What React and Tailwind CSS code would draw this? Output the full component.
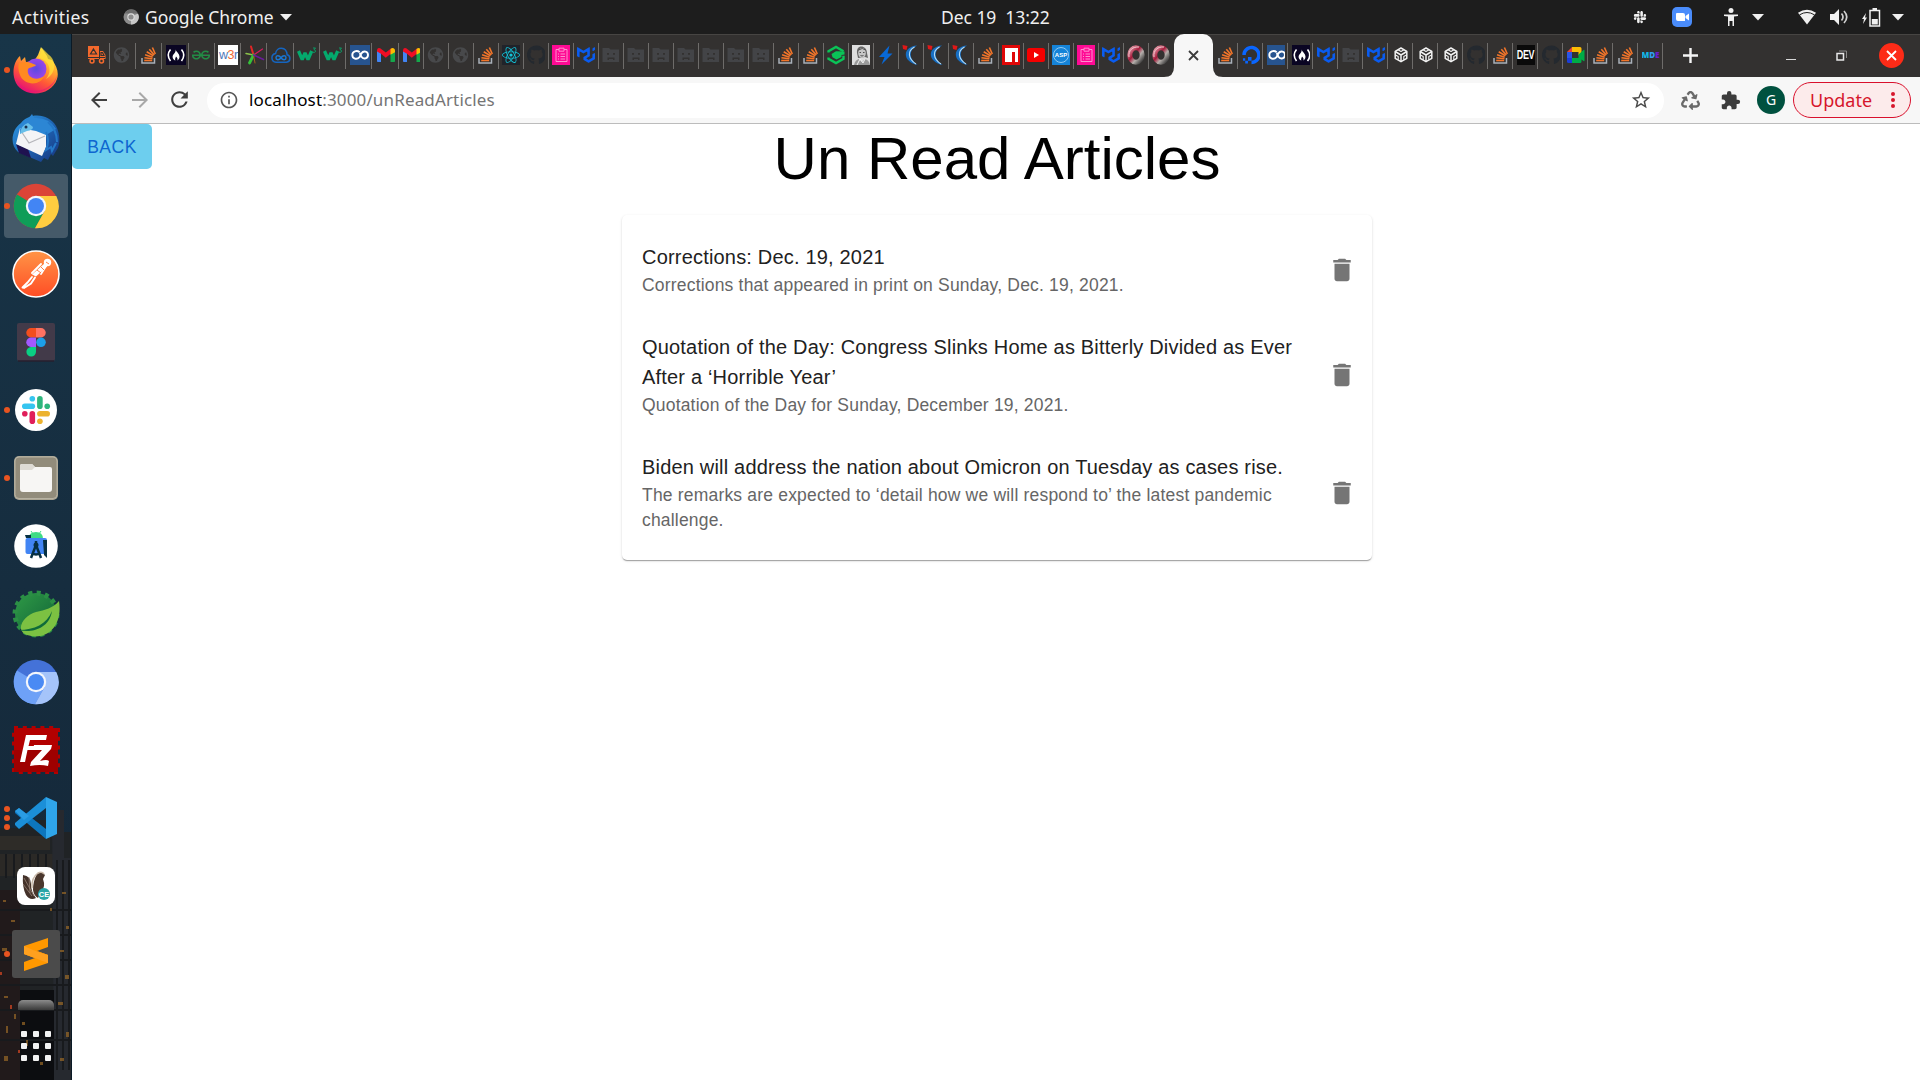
import React from "react";
import {
  FaStackOverflow,
  FaGithub,
  FaReact,
  FaGlobeAmericas,
  FaSlack,
  FaRecycle,
  FaDigitalOcean,
} from "react-icons/fa";
import { SiMui, SiGeeksforgeeks } from "react-icons/si";
import {
  MdArrowBack,
  MdArrowForward,
  MdRefresh,
  MdOutlineInfo,
  MdStarBorder,
  MdExtension,
  MdDelete,
} from "react-icons/md";

/* ---------- tab favicons, each drawn on a 20x20 box ---------- */

const Svg = ({ children, size = 20, box = 20 }) => (
  <svg className="block shrink-0" width={size} height={size} viewBox={`0 0 ${box} ${box}`} fill="none">
    {children}
  </svg>
);

const StackOverflow = () => (
  <Svg>
    <path d="M2 13V18h12.500v-5" stroke="#a9b0b8" strokeWidth="1.500" />
    <g stroke="#f4762a" strokeWidth="1.600">
      <path d="M4.200 15.500h8" />
      <path d="M4.400 12.700l8 1" />
      <path d="M5.100 9.800l7.600 2.400" />
      <path d="M6.700 6.800l6.700 4" />
      <path d="M9.300 4.300l5 5.700" />
      <path d="M12.400 2.500l2.900 6.500" />
    </g>
  </Svg>
);

const Globe = () => <FaGlobeAmericas className="h-4 w-[17px] shrink-0 text-[#48494b]" />;

const FreeCode = () => (
  <Svg>
    <path d="M0 0h20v20H0z" fill="#0a0523" />
    <path d="M4.500 4.500Q0 10 4.500 16M15.500 4.500q4.500 5.500 0 11.500" stroke="#fff" strokeWidth="1.600" />
    <path d="M9.700 4.500c.5 2.500 3.800 4 3.800 7.300 0 2-1.300 3.400-2.300 3.800.8-1.400.3-2.700-1.200-4-.3 1.400-1.500 2.600-.6 4-1.800-.6-2.800-2-2.800-3.800C6.600 9.200 10 8 9.700 4.500z" fill="#fff" />
  </Svg>
);

const Gfg = () => <SiGeeksforgeeks className="h-[18px] w-[18px] shrink-0 text-[#238b45]" />;

const W3r = () => (
  <div className="flex h-5 w-5 shrink-0 items-center justify-center bg-white font-['Liberation_Sans'] text-[12.5px] leading-none tracking-[-0.5px] text-[#4f78b8]">
    w<span className="text-[#f26b35]">3</span>r
  </div>
);

const Splash = () => (
  <Svg>
    <g strokeLinecap="round">
      <path d="M8.500 10L6 1.500" stroke="#e32626" strokeWidth="2" />
      <path d="M8.500 10l9-6" stroke="#d81b60" strokeWidth="1.200" />
      <path d="M8.500 10L1 8.500" stroke="#8bc34a" strokeWidth="1.500" />
      <path d="M8.500 10l-4 8" stroke="#35c13a" strokeWidth="2.800" />
      <path d="M8.500 10l1.500 8" stroke="#a0651c" strokeWidth="1" />
      <path d="M8.500 10l10 4.500" stroke="#6a1b9a" strokeWidth="1.600" />
    </g>
  </Svg>
);

const CloudLoop = () => (
  <Svg>
    <path d="M5 17.300h10.500c4.500-.8 4.300-6.500.6-7.500C15.500 1.500 5.500 1.300 4.600 8.500-.5 9.500-.2 16.600 5 17.300z" stroke="#1565c0" strokeWidth="1.500" />
    <path d="M10 12.700c-2-2.800-5-2.400-5 0s3 2.800 5 0 5-2.400 5 0-3 2.800-5 0z" stroke="#1976d2" strokeWidth="1.500" />
  </Svg>
);

const W3 = () => (
  <Svg>
    <path d="M1.500 6l3.700 8.500L8 8l3 6.500L14.700 6" stroke="#04aa6d" strokeWidth="3.300" strokeLinejoin="bevel" />
    <path d="M16 3h2.500l-1.500 1.800c2.500.2 2 3.400-1.200 2.400" stroke="#04aa6d" strokeWidth=".9" />
  </Svg>
);

const Co = () => (
  <Svg>
    <path d="M0 0h20v20H0z" fill="#27548f" />
    <path d="M9.700 7.200C6.800 5 2.300 6.200 2.300 10s4.500 5 7.200 2.200l1.800-3.700c2.300-3.500 6.700-2 6.700 1.500s-4.500 5-6.700 1.500L9.700 8" stroke="#fff" strokeWidth="1.900" />
  </Svg>
);

const Gmail = () => (
  <Svg>
    <path d="M1 5l4 3v9H1.800q-.8 0-.8-1z" fill="#4285f4" />
    <path d="M19 5l-4.500 3v9h3.700q.8 0 .8-1z" fill="#15a84b" />
    <path d="M1 5.500Q1 2 4.200 3.200L9.800 7.500 15 3.500v5l-5.200 4.200L5 8.700 1 6.500z" fill="#f00d24" />
    <path d="M14.500 4c2-2 4.500-.5 4.500 1.500v1.700l-4.500 2.600z" fill="#fbbc04" />
  </Svg>
);

const ReactTab = () => (
  <div className="flex h-5 w-[18px] shrink-0 items-center justify-center bg-[#20232a]">
    <FaReact className="h-[18px] w-[18px] text-[#12c4d8]" />
  </div>
);

const Github = () => <FaGithub className="h-5 w-[19px] shrink-0 text-[#24292f]" />;

const Clipboard = () => (
  <Svg>
    <path d="M0 0h20v20H0z" fill="#ff0a94" />
    <path d="M7 4.500H4v12h11v-12h-3M7 3.200h5v3H7zM6 9h1m1.500 0H13M6 11.500h1m1.500 0H13M6 14h1m1.500 0H13" stroke="#ff8fcd" strokeWidth="1" />
  </Svg>
);

const Mui = () => <SiMui className="h-[18px] w-[18px] shrink-0 text-[#0a5cf0]" />;

const SadFolder = () => (
  <Svg>
    <path d="M.5 3H7l1.500 1.500H17V17H.5z" fill="#434447" />
    <path d="M5 8h2v1.700H5zM11 8h2v1.700h-2zM5.500 12.500h7V15H11v-1H7v1H5.500z" fill="#333130" />
  </Svg>
);

const Hexagon = () => (
  <Svg>
    <path d="M1.500 7.500V6.300L9 2l7.500 4.300M1.500 12.500v1.200L9 18l7.500-4.300v-3" stroke="#0ac357" strokeWidth="2.400" />
    <path d="M4.500 9L9 6.300 17.500 6.500v3l-3 .5v2L9.500 14.500l-4-2.300z" fill="#0ac357" />
  </Svg>
);

const Portrait = () => (
  <Svg>
    <path d="M0 0h20v20H0z" fill="#dedede" />
    <path d="M5 8C4-1 15 0 15 8l1 5-3-1-7 1z" fill="#666" />
    <ellipse cx="10" cy="8" rx="3.800" ry="4.900" fill="#c6c6c6" />
    <path d="M6.500 5q4-3 7 0M7.500 7.500H9M11 7.500h1.500M8.500 10.500q1.500 1 3 0" stroke="#444" strokeWidth=".9" />
    <path d="M2 20q1-5 5-6l3 3 3-3q4 1 5 6z" fill="#9a9a9a" />
    <path d="M5 20l3-6 3 4 2-4" stroke="#f2f2f2" />
  </Svg>
);

const Bolt = () => (
  <Svg>
    <path d="M12.500.5L2 12h5.500L4.500 19.500 15.500 8.500h-5z" fill="#0869d8" />
  </Svg>
);

const Comet = () => (
  <Svg>
    <path d="M15 .5C1 1.500-1 16 15.500 20 7 14 6 5.500 15 .5z" fill="#176fc4" />
    <path d="M12.500 2C5 6 6 13.500 14 19" stroke="#b5dcf5" strokeWidth="1.100" />
    <path d="M.5 0l5 1-1 4-3.500-1z" fill="#e01818" />
  </Svg>
);

const Npm = () => (
  <Svg>
    <path d="M0 0h20v20H0z" fill="#e00707" />
    <path d="M3 3h13v14h-3V7H10v10H3z" fill="#fff" />
  </Svg>
);

const Youtube = () => (
  <Svg>
    <rect x="0" y="3" width="18" height="14" rx="2.500" fill="#f50000" />
    <path d="M7 7l5 3-5 3z" fill="#fff" />
  </Svg>
);

const Asp = () => (
  <div className="flex h-5 w-[18px] shrink-0 items-center justify-center bg-[#1583d8]">
    <div className="flex h-4 w-4 items-center justify-center rounded-full border border-[#8fc8f2] font-['Liberation_Sans'] text-[6px] font-bold leading-none text-white">
      ASP
    </div>
  </div>
);

const Ring = () => (
  <Svg>
    <defs>
      <linearGradient id="ring" x1="0" y1="0" x2="1" y2="1">
        <stop offset="0" stopColor="#e9a0ae" />
        <stop offset=".4" stopColor="#a51b3b" />
        <stop offset=".65" stopColor="#b5b0ac" />
        <stop offset="1" stopColor="#333" />
      </linearGradient>
    </defs>
    <ellipse cx="9" cy="10" rx="6.200" ry="7.300" stroke="url(#ring)" strokeWidth="5" />
    <path d="M2 12C1 5 6 1.500 12 2" stroke="#f3c9cf" strokeWidth="1" />
  </Svg>
);

const Ocean = () => <FaDigitalOcean className="h-5 w-[19px] shrink-0 text-[#0a66ff]" />;

const Cube = () => (
  <Svg>
    <g stroke="#f2f2f2" strokeWidth="1.500" strokeLinejoin="round">
      <path d="M9 3l5.800 3.300v7L9 16.700l-5.800-3.400v-7z" />
      <path d="M3.200 6.500L9 10l5.800-3.500M9 10v6.500" />
      <path d="M6 4.800l3 1.700 3-1.700M3.500 10l2.700 1.500v3.200M14.500 10l-2.700 1.500v3.200" strokeWidth="1.100" />
    </g>
  </Svg>
);

const Dev = () => (
  <div className="flex h-5 w-[18px] shrink-0 items-center justify-center bg-[#0a0a0a]">
    <span className="scale-y-[1.4] font-['Liberation_Sans'] text-[9px] font-bold leading-none tracking-[-0.3px] text-white">DEV</span>
  </div>
);

const Meet = () => (
  <Svg>
    <path d="M0 7l5-5v5z" fill="#ea4335" />
    <path d="M5 2h8q1.500 0 1.500 1.500V8l-3 2.500V7H5z" fill="#fbbc04" />
    <path d="M0 7h5v6H0z" fill="#2b55e8" />
    <path d="M0 13h5v5H1.500Q0 18 0 16.500z" fill="#1b3dd8" />
    <path d="M5 13h6.500V9.500l5-4.500q1-.5 1 .5v10q0 1-1 .5l-2-1.500v2q0 1.500-1.500 1.500H5z" fill="#00ac47" />
  </Svg>
);

const Mde = () => (
  <div className="flex h-5 w-[19px] shrink-0 items-center font-['Open_Sans'] text-[8px] font-extrabold leading-none text-[#12b5e8]">
    M<span className="text-[#2f9ff0]">D</span>
    <span className="text-[#6b1fd0]">E</span>
  </div>
);

const Truck = () => (
  <Svg>
    <path d="M1 1h11v13H1zM13 6h3l2.500 4v4H13z" fill="#f4692c" />
    <path d="M6.500 4l3 5h-6zM14 7.500h1.500l1.500 3h-3z" stroke="#333130" strokeWidth="1.200" />
    <path d="M1 12.500h17" stroke="#333130" strokeWidth="1" />
    <circle cx="5" cy="16" r="2" stroke="#f4692c" strokeWidth="1.500" fill="#333130" />
    <circle cx="14.500" cy="16" r="2" stroke="#f4692c" strokeWidth="1.500" fill="#333130" />
  </Svg>
);

const wideTabs = [Truck, Globe, StackOverflow, FreeCode, Gfg, W3r, Splash, CloudLoop, W3, W3, Co, Gmail];
const middleTabs = [
  Gmail, Globe, Globe, StackOverflow, ReactTab, Github, Clipboard, Mui,
  SadFolder, SadFolder, SadFolder, SadFolder, SadFolder, SadFolder, SadFolder,
  StackOverflow, StackOverflow, Hexagon, Portrait, Bolt, Comet, Comet, Comet,
  StackOverflow, Npm, Youtube, Asp, Clipboard, Mui, Ring, Ring,
];
const rightTabs = [
  StackOverflow, Ocean, Co, FreeCode, Mui, SadFolder, Mui, Cube, Cube, Cube,
  Github, StackOverflow, Dev, Github, Meet, StackOverflow, StackOverflow, Mde,
];

const Tab = ({ icon: Icon, wide, last }) => (
  <div className={`flex h-[26px] shrink-0 items-center pl-[3.5px] ${wide ? "w-[26.25px]" : "w-[25px]"}`}>
    <div className={`-mt-[2px] flex h-5 items-center overflow-hidden ${wide ? "w-5" : "w-[18px]"}`}>
      <Icon />
    </div>
    <div className={`ml-auto h-full w-px ${last ? "" : "bg-[#6e6c6a]"}`} />
  </div>
);

const Caret = () => (
  <svg className="block" width="12" height="7" viewBox="0 0 12 7">
    <path d="M0 0h12L6 6.500z" fill="#f0f0f0" />
  </svg>
);

const TopBar = () => (
  <header className="flex h-[34px] items-center bg-[#1d1d1d] font-['Noto_Sans',sans-serif] text-[17.5px] text-[#f0f0f0]">
    <div className="flex w-[941px] items-center pl-3">
      <span className="w-[111px] tracking-[0.48px]">Activities</span>
      <svg width="16" height="16" viewBox="0 0 16 16">
        <circle cx="8" cy="8" r="7.500" fill="#8c8c8c" />
        <path d="M8 8l7-3.500A7.500 7.500 0 0 1 8 15.500z" fill="#c6c6c6" />
        <path d="M1.500 4.500A7.500 7.500 0 0 1 15 4.500H8z" fill="#6c6c6c" />
        <circle cx="8" cy="8" r="3.700" fill="#ddd" />
        <circle cx="8" cy="8" r="2.600" fill="#8c8c8c" />
      </svg>
      <span className="ml-[6px] w-[129px] whitespace-nowrap tracking-[-0.05px]">Google Chrome</span>
      <span className="ml-[6px]"><Caret /></span>
    </div>
    <div className="whitespace-pre tracking-[-0.05px]">Dec 19  13:22</div>
    <div className="flex flex-1 items-center justify-end pr-4">
      <FaSlack className="mr-[25px] h-[14px] w-[14px]" />
      <div className="mr-[31px] flex h-5 w-5 items-center justify-center rounded-[5px] bg-[#4a8cfb]">
        <svg width="13" height="8" viewBox="0 0 13 8">
          <path d="M0 1q0-1 1-1h6q2 0 2 2v6H2Q0 8 0 6zM9.500 3L13 .5v7L9.500 5z" fill="#fff" />
        </svg>
      </div>
      <svg className="mr-[13px]" width="16" height="18" viewBox="0 0 16 18">
        <circle cx="8" cy="2.500" r="2.500" fill="#f0f0f0" />
        <path d="M1 6.500h14v1.500l-4 .5V18H9.500v-5h-3v5H5V8.500L1 8z" fill="#f0f0f0" />
      </svg>
      <span className="mr-[33px]"><Caret /></span>
      <svg className="mr-[13px]" width="20" height="16" viewBox="0 0 20 16">
        <path d="M1 3.700Q10-2 19 3.700L10 15.500z" fill="#f0f0f0" />
        <path d="M2.600 5.800Q10 1.200 17.400 5.800" stroke="#1d1d1d" fill="none" strokeWidth="1" />
      </svg>
      <svg className="mr-[13px]" width="19" height="16" viewBox="0 0 19 16" fill="none">
        <path d="M0 5h4l5-5v16l-5-5H0z" fill="#f0f0f0" />
        <path d="M11.500 4.500q3 3.500 0 7M14 2q5.500 6 0 12" stroke="#d0d0d0" strokeWidth="1.700" />
      </svg>
      <svg className="mr-[11px]" width="19" height="19" viewBox="0 0 19 19" fill="none">
        <path d="M4 5L0 11h2l-1 5 4-6.500H3z" fill="#f0f0f0" />
        <path d="M8 2.500h9.500V18H8z" stroke="#f0f0f0" strokeWidth="1.500" />
        <path d="M10.500 0h4.500v2.500h-4.500zM9.800 11h6v5.500h-6z" fill="#f0f0f0" />
      </svg>
      <Caret />
    </div>
  </header>
);

const TabStrip = () => (
  <div className="flex h-[43px] items-center border-t border-[#474543] bg-[#333130] pl-[11.5px]">
    {wideTabs.map((icon, i) => <Tab key={i} icon={icon} wide />)}
    {middleTabs.map((icon, i) => <Tab key={i} icon={icon} last={i === middleTabs.length - 1} />)}
    <div className="relative -mt-px flex h-[43px] w-[39.5px] shrink-0 items-center justify-center rounded-t-[10px] bg-[#f7f7f7]">
      <svg className="absolute -left-[10px] bottom-0" width="10" height="10"><path d="M10 0v10H0Q10 10 10 0z" fill="#f7f7f7" /></svg>
      <svg className="absolute -right-[10px] bottom-0" width="10" height="10"><path d="M0 0v10h10Q0 10 0 0z" fill="#f7f7f7" /></svg>
      <svg width="11" height="11" viewBox="0 0 11 11"><path d="M1 1l9 9M10 1l-9 9" stroke="#3b3b3b" strokeWidth="1.800" /></svg>
    </div>
    {rightTabs.map((icon, i) => <Tab key={i} icon={icon} />)}
    <svg className="-mt-px ml-5" width="15" height="15" viewBox="0 0 15 15"><path d="M7.500 0v15M0 7.500h15" stroke="#f5f5f5" strokeWidth="2.400" /></svg>
    <div className="-mt-px ml-auto flex items-center pr-4">
      <div className="mr-10 mt-[7px] h-px w-[10px] bg-[#d8d8d8]" />
      <svg className="mr-8" width="11" height="11" viewBox="0 0 11 11" fill="none">
        <path d="M3 1h7.500v7" stroke="#8b8a89" />
        <path d="M1 3.500h6.500V10H1z" stroke="#e8e8e8" strokeWidth="1.500" />
      </svg>
      <div className="flex h-[25px] w-[25px] items-center justify-center rounded-full bg-[#fd2b17]">
        <svg width="11" height="11" viewBox="0 0 11 11"><path d="M1 1l9 9M10 1l-9 9" stroke="#fff" strokeWidth="1.800" /></svg>
      </div>
    </div>
  </div>
);

const Toolbar = () => (
  <div className="flex h-[47px] items-center border-b border-[#bcbcbc] bg-[#f7f7f7] pr-[9px] font-['Noto_Sans',sans-serif]">
    <MdArrowBack className="-mt-px ml-[15px] h-6 w-6 text-[#3f3f3f]" />
    <MdArrowForward className="-mt-px ml-[17px] h-6 w-6 text-[#a8a8a8]" />
    <MdRefresh className="-mt-px ml-[15px] h-[25px] w-[25px] text-[#3f3f3f]" />
    <div className="ml-[15px] flex h-[35px] flex-1 items-center rounded-full bg-white pl-[12px] pr-3">
      <MdOutlineInfo className="h-5 w-5 text-[#555]" />
      <span className="ml-[10px] flex-1 text-[17px] tracking-[0.15px] text-[#757575]">
        <span className="text-black">localhost</span>:3000/unReadArticles
      </span>
      <MdStarBorder className="h-[22px] w-[22px] text-[#4a4a4a]" />
    </div>
    <FaRecycle className="ml-[17px] h-[19px] w-[19px] text-[#6a6a6a]" />
    <MdExtension className="ml-[20px] h-[21px] w-[21px] text-[#3c3c3c]" />
    <div className="-mt-px ml-[16px] flex h-7 w-7 items-center justify-center rounded-full bg-[#00513f] text-[14px] leading-none text-white">G</div>
    <div className="ml-2 flex h-9 w-[118px] items-center rounded-full border-[1.5px] border-[#d9102c] bg-[#fcebeb] pl-[16px] text-[18px] text-[#d6162c]">
      <span className="w-[80px]">Update</span>
      <svg width="6" height="18" viewBox="0 0 6 18" fill="#d6162c">
        <circle cx="3" cy="3" r="2" /><circle cx="3" cy="9" r="2" /><circle cx="3" cy="15" r="2" />
      </svg>
    </div>
  </div>
);

/* ---------- dock icons, each drawn on a 48x48 box ---------- */

const D = ({ children }) => <Svg size={48} box={48}>{children}</Svg>;

const Firefox = () => (
  <D>
    <defs>
      <linearGradient id="ff" x1=".8" y1="0" x2=".3" y2="1">
        <stop offset="0" stopColor="#fff24a" /><stop offset=".35" stopColor="#ffb02e" />
        <stop offset=".65" stopColor="#ff5a36" /><stop offset="1" stopColor="#e50b78" />
      </linearGradient>
      <radialGradient id="ffp"><stop offset="0" stopColor="#5a4be0" /><stop offset="1" stopColor="#9a45e8" /></radialGradient>
    </defs>
    <path d="M8 10l1 5 4-4 1 5 8-1 4-6 3-8 6 9 1 3 4 1c5 6 7 13 5 19-6 18-33 19-41 4C-1 27 2 15 8 10z" fill="url(#ff)" />
    <circle cx="24" cy="23" r="10.500" fill="url(#ffp)" />
    <path d="M7 17q9-2 12 0l5 2c-1 2-6 2-8 4-2 8 8 13 16 7-3 10-20 10-24-1-2-5-2-9-1-12z" fill="#ff8a20" />
    <path d="M27 12c10 2 14 13 7 21 11-6 10-19 3-24l-7-7z" fill="#ffe03a" opacity=".75" />
    <path d="M3 29c5 21 36 21 42 0-2 20-38 25-42 0z" fill="#e4157c" opacity=".6" />
  </D>
);

const Thunderbird = () => (
  <D>
    <defs>
      <linearGradient id="tb" x1="0" y1="0" x2="1" y2="1"><stop offset="0" stopColor="#2f9de8" /><stop offset=".55" stopColor="#1d5fae" /><stop offset="1" stopColor="#17337c" /></linearGradient>
    </defs>
    <path d="M9 9C17-2 37-1 44 12c4 7 5 19 0 25l-3 5-2-2-3 6-4-2-3 4L6 38C-3 30 0 15 9 9z" fill="url(#tb)" />
    <path d="M4 30l3 9 12 5-3-9z" fill="#1f1250" />
    <path d="M8 14l26 1v18l-4 9L4 30z" fill="#f4f4f6" />
    <path d="M9 17l8 12 16-7" stroke="#b5b5ba" strokeWidth="1.200" />
    <path d="M8 20Q7 9 16 5l4-5 2 4q15-1 22 11L34 21 24 17 13 15z" fill="#2c86d4" />
    <path d="M8 20l7-3q6-1 6-4l-5-4q-7 2-8 11z" fill="#68bfe9" />
    <circle cx="14" cy="13" r="1.500" fill="#182f50" />
    <path d="M34 18q4 9 0 18l5-3 1 4 4-8M36 8q9 8 9 20" stroke="#2478c8" strokeWidth="2" />
  </D>
);

const ChromeLogo = ({ top, left, right, center }) => (
  <D>
    <circle cx="24" cy="24" r="22.300" fill={top} />
    <path d="M24 24L5 12.500A22.300 22.300 0 0 0 23 46.300l9.500-17z" fill={left} />
    <path d="M24 14h20.300A22.300 22.300 0 0 1 23 46.300l9.500-17z" fill={right} />
    <circle cx="24" cy="24" r="10.200" fill="#f4f6fb" />
    <circle cx="24" cy="24" r="8" fill={center} />
  </D>
);
const Chrome = () => <ChromeLogo top="#db4437" left="#0f9d58" right="#ffcd40" center="#4285f4" />;
const Chromium = () => <ChromeLogo top="#4472d8" left="#6ea1f7" right="#a5c4fa" center="#4a8af4" />;

const Postman = () => (
  <D>
    <defs><linearGradient id="pm" x1="0" y1="0" x2="0" y2="1"><stop offset="0" stopColor="#ff9446" /><stop offset="1" stopColor="#ff4d25" /></linearGradient></defs>
    <circle cx="24" cy="24" r="23" fill="url(#pm)" stroke="#fff" strokeWidth="1.600" />
    <circle cx="35.500" cy="12.500" r="3.700" fill="#fff" />
    <path d="M32.500 13.500L20 24.500l4 2 11-10z" fill="#fff" />
    <path d="M20 27l-4.500 5.500-5 5M23 27.500l-4 6-7 4.500M29 14l-9 9M34 16l-5 8" stroke="#fff" strokeWidth="1.900" strokeLinecap="round" />
    <path d="M25 20l4 3M29 17l3 3M34 12l3 2" stroke="#ff7035" strokeWidth=".9" />
  </D>
);

const Figma = () => (
  <D>
    <rect x="5" y="5" width="38" height="38" rx="2" fill="#423a49" />
    <path d="M6 43h36" stroke="#271f2e" strokeWidth="1.500" />
    <path d="M24 10h-5a4.700 4.700 0 0 0 0 9.500h5z" fill="#f24e1e" />
    <path d="M24 10h5a4.700 4.700 0 0 1 0 9.500h-5z" fill="#ff7262" />
    <path d="M24 19.500h-5a4.700 4.700 0 0 0 0 9.500h5z" fill="#a259ff" />
    <circle cx="29" cy="24.300" r="4.800" fill="#1c9fe8" />
    <path d="M24 29h-5a4.800 4.800 0 1 0 5 4.800z" fill="#0acf83" />
  </D>
);

const Slack = () => (
  <D>
    <circle cx="24" cy="24" r="21" fill="#fff" />
    <g strokeWidth="5.600" strokeLinecap="round">
      <path d="M12.800 20.300h7.500" stroke="#36c5f0" /><path d="M20.300 12.800h.01" stroke="#36c5f0" />
      <path d="M27.900 12.800v7.500" stroke="#2eb67d" /><path d="M35.200 20.300h.01" stroke="#2eb67d" />
      <path d="M27.900 27.800h7.300" stroke="#ecb22e" /><path d="M27.900 35.300h.01" stroke="#ecb22e" />
      <path d="M20.300 27.800v7.500" stroke="#e01e5a" /><path d="M12.800 27.800h.01" stroke="#e01e5a" />
    </g>
  </D>
);

const Files = () => (
  <D>
    <rect x="2" y="2" width="44" height="44" rx="5" fill="#aaa492" />
    <rect x="3" y="3" width="42" height="41.500" rx="4" fill="#928c7b" stroke="#b7b2a2" />
    <path d="M8 12q0-2 2-2h10l3 3h15q2 0 2 2v20q0 3-3 3H11q-3 0-3-3z" fill="#f7f6f4" />
    <path d="M8 15V12q0-2 2-2h10l3 3-3 3H8z" fill="#dedbd4" />
  </D>
);

const AndroidStudio = () => (
  <D>
    <circle cx="24" cy="24" r="21.800" fill="#fff" />
    <path d="M16 17q1-7 8-7t7 7z" fill="#3ddc84" />
    <path d="M19 9l2 3M29 9l-2 3" stroke="#3ddc84" />
    <path d="M13 13h6v3h-5z" fill="#073042" />
    <rect x="13.500" y="16" width="21.500" height="16" rx="2" fill="#4285f4" />
    <path d="M31 18h4v18l-3-3z" fill="#073042" />
    <path d="M24 19v4M24 23l-5 13M24 23l5 13M20 31q4 3 8 0" stroke="#073042" strokeWidth="2.500" />
    <circle cx="24" cy="23" r="2.500" fill="#073042" />
  </D>
);

const Spring = () => (
  <D>
    <defs><linearGradient id="sp" x1="0" y1="0" x2="1" y2="1"><stop offset="0" stopColor="#2f9b46" /><stop offset="1" stopColor="#0f5f37" /></linearGradient></defs>
    <circle cx="24" cy="24" r="21" fill="url(#sp)" />
    <circle cx="24" cy="24" r="21" stroke="#2b8f45" strokeWidth="5" strokeDasharray="4 4.250" />
    <path d="M47 11C51 37 34 51 15 45 2 40 12 25 24 22c9-2 17-4 23-11z" fill="#7cc142" />
    <path d="M40 21C35 34 22 40 7 40c11 3 30 0 33-19z" fill="#0f6b3a" />
  </D>
);

const FileZilla = () => (
  <D>
    <path d="M2 2h44v44H2z" fill="#b30000" />
    <path d="M2 2h44v44H2z" stroke="#b30000" strokeWidth="4" strokeDasharray="4 4.800" />
    <path d="M2 24h44v22H2z" fill="#8b0000" opacity=".5" />
    <path d="M8 36L14 9h21l-1 5H18l-1.500 6H26l-1 4h-9.500L13 36z" fill="#fff" />
    <path d="M22 19h18l-1 4-11 12q7-2 9 0l-1 5q-8-2-18 0l1-4 11-12h-9z" fill="#fff" />
  </D>
);

const VsCode = () => (
  <D>
    <path d="M34 3l11 5v32l-11 5z" fill="#2fa5ea" />
    <path d="M3 17l4-3 27 21v10L3 19z" fill="#0d76bd" />
    <path d="M3 31l4 4 27-21V3L3 29z" fill="#1b8fd8" />
    <path d="M3 17l4-3 10 8-5 4z" fill="#2a9ce3" />
  </D>
);

const DBeaver = () => (
  <D>
    <rect x="5" y="5" width="38" height="38" rx="8" fill="#fff" />
    <path d="M11 13q8 1 8 9t5 14q-6 3-10-3-4-8-3-20z" fill="#433129" />
    <path d="M12 16l10 18M11 22l9 12M17 15l1 16" stroke="#a08c80" strokeWidth=".7" />
    <path d="M25 12q5-3 8 1l-2 4q3 8-2 13l-3 6q-4-2-5-8 0-9 4-16z" fill="#4a372d" />
    <path d="M20 26q-1-10 6-15 4-2 6 1" stroke="#c9b8a8" strokeWidth="1.500" />
    <circle cx="32" cy="32" r="6" fill="#2aa6a8" />
    <text x="32" y="34.800" textAnchor="middle" fill="#fff" fontSize="7.500" fontWeight="700" fontFamily="Liberation Sans">CE</text>
  </D>
);

const Sublime = () => (
  <D>
    <rect width="48" height="48" rx="3" fill="#4b4b4b" />
    <path d="M12 16l24-8v9l-11 4 11 4v8l-24 8v-9l11-4-11-4z" fill="#ff9800" />
    <path d="M12 24l13-3 11 4v4l-13-1z" fill="#e88500" />
    <path d="M12 16v8l24 9v-8L21 20z" fill="#ffa01f" />
  </D>
);

const dock = [
  { icon: Firefox, dots: 1 }, { icon: Thunderbird, dots: 0 }, { icon: Chrome, dots: 1, active: true },
  { icon: Postman, dots: 0 }, { icon: Figma, dots: 0 }, { icon: Slack, dots: 1 }, { icon: Files, dots: 1 },
  { icon: AndroidStudio, dots: 0 }, { icon: Spring, dots: 0 }, { icon: Chromium, dots: 0 },
  { icon: FileZilla, dots: 0 }, { icon: VsCode, dots: 3 }, { icon: DBeaver, dots: 0 }, { icon: Sublime, dots: 1 },
];

/* Night skyline behind the lower part of the dock */
const Skyline = () => (
  <svg className="absolute bottom-0 left-0" width="72" height="280" viewBox="0 0 72 280">
    <defs>
      <linearGradient id="dusk" x1="0" y1="0" x2="0" y2="1"><stop offset="0" stopColor="#162735" stopOpacity="0" /><stop offset="1" stopColor="#15171b" /></linearGradient>
    </defs>
    <path d="M0 0h72v280H0z" fill="url(#dusk)" />
    <path d="M0 28h24l3-8h20l3 12h22v248H0z" fill="#202325" />
    <path d="M0 36h50v14H0z" fill="#2e2c28" />
    <path d="M0 54h60v22H0z" fill="#2b2926" />
    <path d="M52 10h12v48h8v222H54z" fill="#26292f" />
    <path d="M0 90h20v190H0z" fill="#211a1b" />
    <path d="M20 190h34v90H20z" fill="#0c0d10" />
    <g stroke="#181a1d" strokeWidth="2">
      <path d="M6 54v24M14 54v24M22 54v24M30 54v24M38 54v24M46 54v24M57 60v210M63 60v210M69 60v210" />
      <path d="M0 110h72M0 135h72M0 160h72M0 185h72M0 210h72M0 240h72" />
    </g>
    <g fill="#9a6a26" opacity=".7">
      <path d="M3 100h3v2H3zM11 120h4v2h-4zM2 148h5v3H2zM12 166h3v4h-3zM4 196h4v2H4zM62 92h4v2h-4zM66 126h3v3h-3zM60 150h4v2h-4zM65 175h4v4h-4zM58 202h5v3h-5zM66 232h3v5h-3zM60 258h4v3h-4zM6 226h2v7H6zM14 214h2v5h-2zM4 256h4v5H4zM26 240h2v6h-2zM40 262h3v3h-3zM22 222h3v3h-3zM50 108h2v3h-2zM36 84h2v3h-2z" />
    </g>
    <path d="M10 205h2v4h-2zM0 172h2v3H0zM18 250h2v3h-2z" fill="#a33a20" />
  </svg>
);

const Dock = () => (
  <aside className="relative flex w-[72px] shrink-0 flex-col items-center overflow-hidden border-r border-[#0b1a26] bg-gradient-to-b from-[#183548] to-[#142637] pt-[2px]">
    <Skyline />
    {dock.map(({ icon: Icon, dots, active }, i) => (
      <div key={i} className="relative flex h-[68px] w-[72px] shrink-0 items-center justify-center">
        <div className={`flex h-16 w-16 items-center justify-center rounded ${active ? "bg-[#455a69]" : ""}`}>
          <Icon />
        </div>
        <div className="absolute left-1 flex h-full flex-col items-center justify-center gap-[3px]">
          {Array.from({ length: dots }, (_, d) => <span key={d} className="h-[6px] w-[6px] rounded-full bg-[#e95420]" />)}
        </div>
      </div>
    ))}
    <div className="relative mt-[12px] h-[10px] w-9 shrink-0 rounded-t-[5px] bg-gradient-to-b from-[#8c8c8c] to-[#3a3a3a]" />
    <div className="relative mt-[21px] grid grid-cols-3 gap-[6px]">
      {Array.from({ length: 9 }, (_, i) => <span key={i} className="h-[6px] w-[6px] rounded-[1px] bg-[#f2f2f2]" />)}
    </div>
  </aside>
);

const articles = [
  { title: "Corrections: Dec. 19, 2021", text: "Corrections that appeared in print on Sunday, Dec. 19, 2021." },
  { title: "Quotation of the Day: Congress Slinks Home as Bitterly Divided as Ever After a ‘Horrible Year’", text: "Quotation of the Day for Sunday, December 19, 2021." },
  { title: "Biden will address the nation about Omicron on Tuesday as cases rise.", text: "The remarks are expected to ‘detail how we will respond to’ the latest pandemic challenge." },
];

const Page = () => (
  <main className="flex-1 bg-white font-['Liberation_Sans',Arial,sans-serif]">
    <div className="grid grid-cols-[1fr_auto_1fr]">
      <button className="h-[45px] w-20 justify-self-start rounded-[5px] bg-[#6dceee] text-[17.5px] leading-[30px] tracking-[0.5px] text-[#0d66d0]">BACK</button>
      <h1 className="pl-[2px] text-[60px] font-normal leading-[70px] text-black">Un Read Articles</h1>
    </div>
    <ul className="ml-[550px] mt-[21px] w-[750px] rounded-[5px] bg-white pb-[11px] pt-[9px] shadow-[0_2px_1px_-1px_rgba(0,0,0,0.2),0_1px_1px_0_rgba(0,0,0,0.14),0_1px_3px_0_rgba(0,0,0,0.12)]">
      {articles.map(({ title, text }) => (
        <li key={title} className="flex items-center py-[17.5px] pl-5 pr-[15px]">
          <div className="w-[670px]">
            <p className="text-[20px] leading-[30px] tracking-[0.1876px] text-[#212121]">{title}</p>
            <p className="pt-px text-[17.5px] leading-[25px] tracking-[0.1874px] text-[#666] -mb-px">{text}</p>
          </div>
          <MdDelete className="ml-auto mt-[2px] h-[30px] w-[30px] text-[#757575]" />
        </li>
      ))}
    </ul>
  </main>
);

export default function App() {
  return (
    <div className="flex h-[1080px] w-[1920px] flex-col overflow-hidden">
      <TopBar />
      <div className="flex min-h-0 flex-1">
        <Dock />
        <div className="flex min-w-0 flex-1 flex-col">
          <TabStrip />
          <Toolbar />
          <Page />
        </div>
      </div>
    </div>
  );
}
